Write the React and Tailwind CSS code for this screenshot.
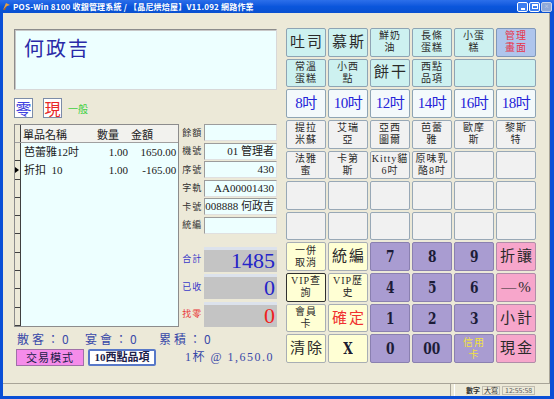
import React from 'react';

const serif = "font-['Liberation_Serif','Noto_Sans_CJK_TC',serif]";

const keys = [
  // row 1
  { t: '吐司', v: 'c', big: true }, { t: '慕斯', v: 'c', big: true }, { t: ['鮮奶', '油'], v: 'c' },
  { t: ['長條', '蛋糕'], v: 'c' }, { t: ['小蛋', '糕'], v: 'c' }, { t: ['管理', '畫面'], v: 'm' },
  // row 2
  { t: ['常溫', '蛋糕'], v: 'c' }, { t: ['小西', '點'], v: 'c' }, { t: '餅干', v: 'c', big: true },
  { t: ['西點', '品項'], v: 'c' }, { t: '', v: 'c' }, { t: '', v: 'c' },
  // row 3
  { t: '8吋', v: 's' }, { t: '10吋', v: 's' }, { t: '12吋', v: 's' },
  { t: '14吋', v: 's' }, { t: '16吋', v: 's' }, { t: '18吋', v: 's' },
  // row 4
  { t: ['提拉', '米蘇'], v: 'g' }, { t: ['艾瑞', '亞'], v: 'g' }, { t: ['亞西', '圖爾'], v: 'g' },
  { t: ['芭蕾', '雅'], v: 'g' }, { t: ['歐摩', '斯'], v: 'g' }, { t: ['黎斯', '特'], v: 'g' },
  // row 5
  { t: ['法雅', '蜜'], v: 'g' }, { t: ['卡第', '斯'], v: 'g' }, { t: ['Kitty貓', '6吋'], v: 'g' },
  { t: ['原味乳', '酪8吋'], v: 'g' }, { t: '', v: 'g' }, { t: '', v: 'g' },
  // rows 6-7
  ...Array.from({ length: 12 }, () => ({ t: '', v: 'g' })),
  // row 8
  { t: ['一併', '取消'], v: 'y' }, { t: '統編', v: 'y', big: true }, { t: '7', v: 'n' },
  { t: '8', v: 'n' }, { t: '9', v: 'n' }, { t: '折讓', v: 'k', big: true },
  // row 9
  { t: ['VIP查', '詢'], v: 'yf' }, { t: ['VIP歷', '史'], v: 'y' }, { t: '4', v: 'n' },
  { t: '5', v: 'n' }, { t: '6', v: 'n' }, { t: '—%', v: 'k', big: true },
  // row 10
  { t: ['會員', '卡'], v: 'y' }, { t: '確定', v: 'yr', big: true }, { t: '1', v: 'n' },
  { t: '2', v: 'n' }, { t: '3', v: 'n' }, { t: '小計', v: 'k', big: true },
  // row 11
  { t: '清除', v: 'y', big: true }, { t: 'X', v: 'yx' }, { t: '0', v: 'n' },
  { t: '00', v: 'n' }, { t: ['信用', '卡'], v: 'pc' }, { t: '現金', v: 'k', big: true },
];

const variants = {
  c: 'bg-[#CDF1F0] text-[#2A2A2A] border-[#8EA4B4]',
  m: 'bg-[#AFC5EC] text-[#E8344A] border-[#7F97B8]',
  s: 'bg-[#F3F9FB] text-[#2424D8] border-[#8EA4B4]',
  g: 'bg-[#F1F1F1] text-[#2A2A2A] border-[#98A8B6]',
  y: 'bg-[#FFFFD4] text-[#2A2A2A] border-[#A8AEB4]',
  yf: 'bg-[#FFFFD4] text-[#2A2A2A] border-[#303030]',
  yr: 'bg-[#FFFFD4] text-[#F03030] border-[#A8AEB4]',
  yx: 'bg-[#FFFFD4] text-[#1C1C30] border-[#A8AEB4]',
  n: 'bg-[#A99CD1] text-[#1C1C38] border-[#8A80B0]',
  pc: 'bg-[#A99CD1] text-[#F2E23C] border-[#8A80B0]',
  k: 'bg-[#F7A6CB] text-[#2A2A2A] border-[#B08CA8]',
};

function Key({ k }) {
  const base = `flex flex-col items-center justify-center border rounded-[2px] leading-none overflow-hidden ${variants[k.v]}`;
  if (Array.isArray(k.t)) {
    return (
      <div className={base}>
        {k.t.map((l) => (
          <span key={l} className="text-[10px] leading-[12px] tracking-[1px] whitespace-nowrap">{l}</span>
        ))}
      </div>
    );
  }
  if (k.v === 'n' || k.v === 'yx') {
    return (
      <div className={base}>
        <span className="text-[17px] font-bold font-['DejaVu_Serif_Condensed','Liberation_Serif',serif] scale-x-[0.8]">{k.t}</span>
      </div>
    );
  }
  if (k.v === 's') {
    return (
      <div className={base}>
        <span className="text-[15px] tracking-[-0.5px] whitespace-nowrap">{k.t}</span>
      </div>
    );
  }
  return (
    <div className={base}>
      <span className={k.big ? 'text-[15px] tracking-[2px] pl-[2px] whitespace-nowrap' : 'text-[12px] whitespace-nowrap'}>{k.t}</span>
    </div>
  );
}

const info = [
  ['餘額', ''],
  ['機號', '01 管理者'],
  ['序號', '430'],
  ['字軌', 'AA00001430'],
  ['卡號', '008888 何政吉'],
  ['統編', ''],
];

const totals = [
  ['合計', '1485', 'text-[#3A3AC8]', 'text-[#2424C8]'],
  ['已收', '0', 'text-[#3A3AC8]', 'text-[#2424C8]'],
  ['找零', '0', 'text-[#E83838]', 'text-[#F02020]'],
];

const rows = [
  ['芭蕾雅12吋', '1.00', '1650.00'],
  ['折扣  10', '1.00', '-165.00'],
  ...Array.from({ length: 8 }, () => ['', '', '']),
];

export default function App() {
  return (
    <div className={`w-[554px] h-[399px] bg-[#ECE9D8] flex flex-col overflow-hidden ${serif}`}>
      {/* title bar */}
      <div className="h-[13px] flex items-center bg-gradient-to-b from-[#2C6FEA] via-[#0A56DC] to-[#0950D0] pl-[2px] pr-[2px]">
        <svg width="9" height="9" viewBox="0 0 9 9" className="mr-[2px]">
          <path d="M1 8 L4 1 L8 3 L5 4 Z" fill="#E8A040" />
          <path d="M1 8 L5 4 L3 8 Z" fill="#B06020" />
        </svg>
        <span className="text-white text-[8px] font-bold whitespace-nowrap tracking-[0.2px] font-['Noto_Sans_CJK_TC',sans-serif]">
          POS-Win 8100 收銀管理系統  /  【晶尼烘焙屋】V11.092 網路作業
        </span>
        <div className="ml-auto flex gap-[1px]">
          <div className="w-[11px] h-[10px] rounded-[2px] bg-[#3C7EF0] border border-white flex items-end justify-center pb-[1px]">
            <div className="w-[4px] h-[2px] bg-white" />
          </div>
          <div className="w-[11px] h-[10px] rounded-[2px] bg-[#3C7EF0] border border-white flex items-center justify-center">
            <div className="w-[6px] h-[5px] border border-white border-t-2" />
          </div>
          <div className="w-[11px] h-[10px] rounded-[2px] bg-[#8EA8D8] border border-[#C8D4EC] flex items-center justify-center text-[8px] leading-none text-[#C8D4EC]">×</div>
        </div>
      </div>

      {/* window body */}
      <div className="flex-1 flex flex-col border-l-[3px] border-r-[4px] border-b-[3px] border-[#0A4FD6]">
        <div className="h-[370px] flex pt-[15px] pl-[11px] border-r border-[#A8A498]">
          {/* left column */}
          <div className="w-[263px] flex flex-col">
            <div className="mt-[1px] h-[61px] bg-[#EDFFFF] border border-t-[#8C8C8C] border-l-[#8C8C8C] border-b-[#D8D8D8] border-r-[#D8D8D8] shadow-[inset_1px_1px_0_#C8C8C8] pl-[9px] pt-[8px]">
              <span className="text-[20px] leading-none tracking-[2px] text-[#2A2AA8] font-['Noto_Sans_CJK_TC',serif]">何政吉</span>
            </div>

            <div className="mt-[8px] h-[20px] flex items-center">
              <div className="w-[19px] h-[20px] border border-[#7C8CA8] bg-white flex items-center justify-center text-[16px] leading-none text-[#4040E0] font-['Noto_Sans_CJK_TC',serif]">零</div>
              <div className="ml-[10px] w-[19px] h-[20px] border border-[#7C8CA8] bg-white flex items-center justify-center text-[16px] leading-none text-[#E82828] font-['Noto_Sans_CJK_TC',serif]">現</div>
              <span className="ml-[6px] text-[10px] text-[#40D040] font-['Noto_Sans_CJK_TC',serif]">一般</span>
            </div>

            <div className="mt-[6px] h-[203px] flex">
              {/* item table */}
              <div className="w-[168px] flex flex-col border border-[#8C8C8C] bg-[#EDFFFF]">
                <div className="h-[18px] flex shrink-0 border-b border-[#A0A0A0] bg-[#F2F2EE] text-[11px] text-[#202020] font-['Noto_Sans_CJK_TC',serif]">
                  <div className="w-[6px] border-r border-[#404040] bg-[#ECE9D8]" />
                  <div className="w-[72px] pl-[2px] leading-[18px]">單品名稱</div>
                  <div className="w-[36px] pl-[4px] leading-[18px]">數量</div>
                  <div className="flex-1 pl-[2px] leading-[18px]">金額</div>
                </div>
                {rows.map((r, i) => (
                  <div key={i} className="flex-1 flex text-[11px] text-[#202020]">
                    <div className="w-[6px] border-r border-[#404040] bg-[#ECE9D8] border-b border-b-[#404040] flex items-center">
                      {i === 1 && (
                        <svg width="4" height="6" viewBox="0 0 4 6"><path d="M0 0 L4 3 L0 6 Z" fill="#000" /></svg>
                      )}
                    </div>
                    <div className="w-[72px] pl-[3px] flex items-center whitespace-pre">{r[0]}</div>
                    <div className="w-[35px] flex items-center justify-end">{r[1]}</div>
                    <div className="flex-1 pr-[2px] flex items-center justify-end">{r[2]}</div>
                  </div>
                ))}
              </div>

              {/* info panel */}
              <div className="ml-[1px] flex-1 flex flex-col">
                <div className="flex flex-col gap-[1.5px]">
                  {info.map(([l, v]) => (
                    <div key={l} className="h-[17px] flex items-center">
                      <span className="w-[24px] pl-[2px] text-[9px] tracking-[1px] text-[#303030] font-['Noto_Sans_CJK_TC',serif]">{l}</span>
                      <div className="flex-1 h-[17px] bg-[#EDFFFF] border border-t-[#9C9C9C] border-l-[#9C9C9C] border-b-[#E0E0E0] border-r-[#E0E0E0] text-[11px] text-[#202020] flex items-center justify-end pr-[2px] whitespace-nowrap">{v}</div>
                    </div>
                  ))}
                </div>
                <div className="mt-[13px] flex flex-col gap-[2.5px]">
                  {totals.map(([l, v, lc, vc]) => (
                    <div key={l} className="h-[25px] flex items-center">
                      <span className={`w-[24px] pl-[2px] text-[9px] tracking-[1px] font-['Noto_Sans_CJK_TC',serif] ${lc}`}>{l}</span>
                      <div className={`flex-1 h-[25px] bg-[#C4C4C4] border-t-[3px] border-[#DCE2EC] flex items-center justify-end pr-[2px] text-[22px] leading-none ${vc}`}>{v}</div>
                    </div>
                  ))}
                </div>
              </div>
            </div>

            <div className="mt-[5px] flex text-[12px] leading-[14px] text-[#3848A8] tracking-[3px] font-['Noto_Sans_CJK_TC',serif]">
              <span className="w-[71px] pl-[3px]">散客：0</span>
              <span className="w-[74px]">宴會：0</span>
              <span>累積：0</span>
            </div>

            <div className="mt-[2px] flex items-center">
              <div className="ml-[2px] w-[68px] h-[17px] bg-[#F58CEA] border border-[#A070A8] flex items-center justify-center text-[11px] text-[#202048] tracking-[1px] font-['Noto_Sans_CJK_TC',serif]">交易模式</div>
              <div className="ml-[4px] w-[68px] h-[17px] bg-white border-2 border-[#5878C8] rounded-[2px] flex items-center justify-center text-[11px] font-bold text-[#202048]">10西點品項</div>
              <span className="ml-[29px] text-[12px] text-[#3848A8] tracking-[1.5px] whitespace-nowrap">1杯   @ 1,650.0</span>
            </div>
          </div>

          {/* key grid */}
          <div className="ml-[9px] mt-0 w-[250px] h-[335px] grid grid-cols-6 grid-rows-11 gap-[2px]">
            {keys.map((k, i) => (
              <Key key={i} k={k} />
            ))}
          </div>
        </div>

        {/* status bar */}
        <div className="flex-1 flex border-t border-[#A8A498]">
          <div className="w-[448px] border-r border-[#A8A498]" />
          <div className="ml-[3px] w-[4px] border-l border-white" />
          <div className="flex items-center gap-[2px] pl-[8px] text-[7px] leading-none font-['Noto_Sans_CJK_TC',sans-serif]">
            <span className="font-bold text-[#303030]">數字</span>
            <span className="border border-[#C0BCB0] px-[1px] text-[#303030]">大寫</span>
            <span className="border border-[#C0BCB0] px-[2px] text-[#606060]">12:55:58</span>
          </div>
        </div>
      </div>
    </div>
  );
}
